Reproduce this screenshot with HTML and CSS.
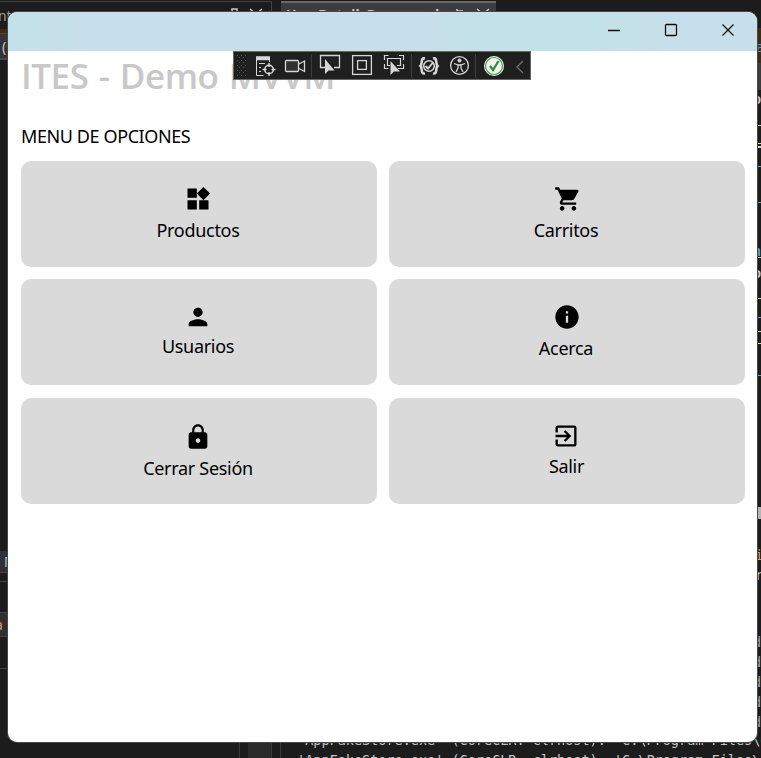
FILE: index.html
```
<!DOCTYPE html>
<html lang="es">
<head>
<meta charset="utf-8">
<title>ITES - Demo MVVM</title>
<link rel="stylesheet" href="styles.css">
</head>
<body>
<div class="desktop">
  <svg class="backdrop" width="761" height="758" aria-hidden="true">
    <path d="M0 1.500H271.500V12" fill="none" stroke="#424242"/>
    <path fill="#3e2b12" d="M0 29h8v4H0z"/><path fill="#343434" d="M0 33h8v27H0z"/>
    <path fill="#464646" d="M0 33h8v1H0zM0 58h8v2H0z"/>
    <path fill="#3d3d3d" d="M281 1h215v12H281z"/><path fill="#686868" d="M281 1h215v2H281z"/>
    <path fill="#3e2b12" d="M756 28h5v35h-5z"/><path fill="#3b3b3b" d="M756 63h5v27h-5z"/>
    <path fill="#303030" d="M0 551h8v22H0zM0 613h8v24H0z"/>
    <path fill="#444" d="M0 572h8v1H0zM0 581h8v1H0zM0 612h8v1H0zM0 636h8v1H0zM0 668h8v1H0z"/>
    <path fill="#d7d5bd" d="M757 109h4v2h-4zM757 125h4v2h-4zM757 135h4v2h-4zM757 142h4v2h-4zM757 240h4v2h-4zM757 257h4v2h-4zM757 267h4v2h-4zM757 274h4v2h-4z" opacity="0"/>
    <path fill="#d7d5bd" d="M757 125h4v1h-4zM757 143h4v1h-4zM757 146h4v2h-4zM757 257h4v1h-4zM757 298h4v1h-4zM757 331h4v1h-4zM757 343h4v1h-4z"/>
    <path fill="#569cd6" d="M757 166h4v1h-4zM757 202h4v1h-4zM757 317h4v1h-4zM757 375h4v1h-4z"/>
    <path fill="#b5b5b5" d="M757 507h4v12h-4z"/>
    <path fill="#2a2a2a" d="M248 740h23v18h-23z"/><path fill="#393939" d="M239 740h1v18h-1zM271 740h1v18h-1zM280 740h1v18h-1z"/>
    <path fill="none" stroke="#c8c8c8" stroke-width="1.500" d="M232 12V9h5v3M250 9l6 5 6-5M457 12V9M457 11h6M477 9l6 5 6-5"/>
  </svg>
  <span class="scrap scrap-left">ent</span>
  <span class="scrap scrap-paren">(</span>
  <span class="scrap scrap-tab">UserDetailsPage.xaml</span>
  <span class="scrap scrap-m">M</span>
  <span class="scrap scrap-a">a</span>
  <span class="edge edge-a">a</span><span class="edge edge-p">o</span><span class="edge edge-n">n</span><span class="edge edge-o">o</span><span class="edge edge-i">i</span><span class="edge edge-r">r</span>
  <pre class="edge edge-list">d
d
d
d
d</pre>
  <pre class="output">'AppFakeStore.exe' (CoreCLR: clrhost): 'C:\Program Files\d
'AppFakeStore.exe' (CoreCLR: clrhost): 'C:\Program Files\d</pre>

  <main class="window">
    <header class="titlebar">
      <button class="caption" aria-label="Minimizar"><svg width="14" height="14"><path d="M1 7.500H13"/></svg></button>
      <button class="caption" aria-label="Maximizar"><svg width="14" height="14"><rect x="1.500" y="1.500" width="11" height="11" rx="1"/></svg></button>
      <button class="caption" aria-label="Cerrar"><svg width="14" height="14"><path d="M1.500 1.500l11 11M12.500 1.500l-11 11"/></svg></button>
    </header>
    <section class="page">
      <h1>ITES - Demo MVVM</h1>
      <h2>MENU DE OPCIONES</h2>
      <div class="menu">
        <div class="card"><svg class="icon" viewBox="0 0 24 24"><path d="M13 13v8h8v-8h-8zM3 21h8v-8H3v8zM3 3v8h8V3H3zm13.660-1.310L11 7.340 16.660 13l5.660-5.660-5.660-5.650z"/></svg><span class="label">Productos</span></div>
        <div class="card"><svg class="icon cart" viewBox="0 0 24 24"><path d="M7 18c-1.100 0-1.990.9-1.990 2S5.900 22 7 22s2-.9 2-2-.9-2-2-2zM1 2v2h2l3.600 7.590-1.350 2.450c-.16.280-.25.610-.25.960 0 1.100.9 2 2 2h12v-2H7.420c-.14 0-.25-.11-.25-.25l.03-.12.900-1.630h7.450c.75 0 1.410-.41 1.750-1.030l3.580-6.490A1 1 0 0 0 20 4H5.210l-.94-2H1zm16 16c-1.100 0-1.990.9-1.990 2s.89 2 1.990 2 2-.9 2-2-.9-2-2-2z"/></svg><span class="label">Carritos</span></div>
        <div class="card"><svg class="icon user" viewBox="0 0 24 24"><path d="M12 12c2.210 0 4-1.790 4-4s-1.790-4-4-4-4 1.790-4 4 1.790 4 4 4zm0 2c-2.670 0-8 1.340-8 4v2h16v-2c0-2.660-5.330-4-8-4z"/></svg><span class="label">Usuarios</span></div>
        <div class="card"><svg class="icon info" viewBox="0 0 24 24"><path d="M12 2C6.480 2 2 6.480 2 12s4.480 10 10 10 10-4.480 10-10S17.520 2 12 2zm1 15h-2v-6h2v6zm0-8h-2V7h2v2z"/></svg><span class="label">Acerca</span></div>
        <div class="card"><svg class="icon lock" viewBox="0 0 24 24"><path d="M18 8h-1V6c0-2.760-2.240-5-5-5S7 3.240 7 6v2H6c-1.100 0-2 .9-2 2v10c0 1.100.9 2 2 2h12c1.100 0 2-.9 2-2V10c0-1.100-.9-2-2-2zm-6 9c-1.100 0-2-.9-2-2s.9-2 2-2 2 .9 2 2-.9 2-2 2zm3.100-9H8.900V6c0-1.710 1.390-3.100 3.100-3.100s3.100 1.390 3.100 3.100v2z"/></svg><span class="label">Cerrar Sesión</span></div>
        <div class="card"><svg class="icon exit" viewBox="0 0 24 24"><path d="M10.090 15.590L11.500 17l5-5-5-5-1.410 1.410L12.670 11H3v2h9.670l-2.580 2.590zM19 3H5a2 2 0 0 0-2 2v4h2V5h14v14H5v-4H3v4a2 2 0 0 0 2 2h14c1.100 0 2-.9 2-2V5c0-1.100-.9-2-2-2z"/></svg><span class="label">Salir</span></div>
      </div>
    </section>
  </main>

  <svg class="debugbar" width="298" height="29" viewBox="0 0 298 29" role="img" aria-label="Herramientas">
    <defs><pattern id="grip" width="4" height="5" patternUnits="userSpaceOnUse" x="4" y="4"><path fill="#565656" d="M0 0h1v1H0zM2 2h1v1H2z"/></pattern></defs>
    <rect x=".5" y=".5" width="297" height="28" fill="#1f1f1f" stroke="#666"/>
    <rect x="4" y="4" width="9" height="22" fill="url(#grip)"/>
    <path stroke="#3c3c3c" d="M78.500 3v24M178.500 3v24M242.500 3v24"/>
    <g fill="none" stroke="#d6d6d6">
      <path d="M23 6.500h14M23 8h14" stroke-width="2.500"/><path d="M23.500 9v15.500h7M36.500 9v2M26 12.500h6M26 16.500h2M26 20.500h2"/>
      <circle cx="36" cy="18.500" r="4.300" stroke-width="1.500"/><path d="M36 12v4M36 21v4M29.500 18.500h4M38.500 18.500h4" stroke-width="1.500"/>
      <rect x="52.500" y="9.500" width="13" height="11" rx="1" fill="#303030" stroke-width="1.300"/><path d="M66 13l5.500-3v10.500l-5.500-3" stroke-width="1.300"/>
      <path d="M92 16.500h-4.500v-12h19v12H101" stroke-width="1.300"/>
      <rect x="119.600" y="4.600" width="18.800" height="18.800" stroke-width="1.300"/><rect x="124.600" y="9.600" width="8.800" height="8.800" stroke-width="1.300"/>
      <path d="M151.500 9V4.500h4M166 4.500h4.500V9M151.500 13v4.500h4M170.500 13v4.500H165M157 14.500h-2.500v-7h13v7H164" stroke-width="1.200"/>
      <path d="M192 7.500c-5-1-2 5-4.500 7.500 2.500 2.500-.5 8 4.500 7.500M200 7.500c5-1 2 5 4.500 7.500-2.500 2.500.5 8-4.500 7.500" stroke-width="2.600"/><circle cx="196" cy="15" r="5.300" stroke-width="1.600"/><path d="M192.500 15l2.500 2.500 5-6" stroke-width="1.900"/>
      <circle cx="226.500" cy="14.500" r="8.900" stroke-width="1.300"/><circle cx="226.500" cy="9.500" r="1.600" fill="#d6d6d6"/><path d="M221 12.500l4 1.500v3l-2 4M232 12.500l-4 1.500v3l2 4M225 14h3" stroke-width="1.300"/>
    </g>
    <path fill="#d6d6d6" d="M92 8v15l3.500-3.500h6zM157.500 10v14l3.500-3.500h6z"/>
    <circle cx="261" cy="15" r="10" fill="#f3f3f3"/><circle cx="261" cy="15" r="8.500" fill="none" stroke="#3fa344" stroke-width="1.200"/>
    <path d="M257 15l3 4 5.500-9" fill="none" stroke="#27902d" stroke-width="2.200"/>
    <path d="M290 10l-6 6 6 6" fill="none" stroke="#707070" stroke-width="1.300"/>
  </svg>
</div>
</body>
</html>
```
FILE: styles.css
```
* { box-sizing: border-box; }
body { margin: 0; background: #1c1c1c; font-family: "Noto Sans", sans-serif; }
.desktop { position: relative; width: 761px; height: 758px; overflow: hidden; padding: 12px 4px 16px 8px; }
.backdrop { position: absolute; left: 0; top: 0; }
.window { position: relative; height: 730px; display: flex; flex-direction: column; width: 749px; background: #fff; border-radius: 9px; overflow: hidden; box-shadow: 0 0 0 1px #484848; }
.titlebar { height: 39px; flex: none; display: flex; justify-content: flex-end; padding-right: 1px; background: linear-gradient(100deg, #c3e1e9 0, #c7dfea 12%, #c7dfea 55%, #c3e1e9 63%, #c3e1e9 78%, #c7dfea 90%); }
.caption { width: 57px; border: 0; padding: 0; background: none; display: flex; align-items: center; justify-content: center; }
.caption svg { fill: none; stroke: #111; stroke-width: 1.3; display: block; margin-top: -3px; }
.page { padding: 0 12px 0 13px; }
h1 { margin: 1px 0 0; height: 48px; font: 600 35px/48px "Open Sans", sans-serif; color: #c8c8c8; white-space: nowrap; letter-spacing: -.45px; word-spacing: 1.6px; }
h2 { margin: 24px 0 0; height: 25px; font-size: 18px; line-height: 25px; font-weight: 400; letter-spacing: -.4px; color: #000; }
.menu { display: grid; grid-template-columns: 356px 356px; grid-auto-rows: 106px; gap: 12.4px 12px; margin-top: 12px; }
.card { display: flex; flex-direction: column; align-items: center; padding: 24px 1px 0 0; border-radius: 10px; background: #dadada; color: #000; }
.icon { width: 28px; height: 28px; flex: none; margin-right: 1px; }
.cart { margin-right: -2px; }
.info { margin-right: -1px; }
.label { height: 25px; margin-top: 5px; font-size: 18px; line-height: 25px; letter-spacing: -.3px; white-space: nowrap; margin-right: 1px; }
.user + .label { margin-top: 3px; }
.exit + .label { margin-top: 4px; margin-right: 0; }
.lock { margin-top: 1px; }
.debugbar { position: absolute; left: 233px; top: 51px; }
.scrap, .edge { position: absolute; color: #c8c8c8; font: 14px/16px "Noto Sans", sans-serif; white-space: pre; }
.scrap-left { left: -10px; top: 8px; color: #a29a8e; }
.scrap-paren { left: 2px; top: 39px; }
.scrap-tab { left: 286px; top: 7px; font-weight: 700; }
.scrap-m { left: 4px; top: 554px; color: #9cc5df; }
.scrap-a { left: -5px; top: 617px; color: #d49a80; }
.edge { left: 753px; font-family: "DejaVu Sans Mono", monospace; font-size: 13.5px; }
.edge-a { left: 756px; top: 39px; color: #569cd6; }
.edge-p { top: 91px; font-weight: 700; }
.edge-n { top: 243px; color: #569cd6; font-weight: 700; }
.edge-o { top: 265px; font-weight: 700; }
.edge-i { left: 755px; top: 547px; color: #d69d62; }
.edge-r { left: 755px; top: 567px; }
.edge-list { top: 632px; margin: 0; line-height: 20px; color: #8fa9bc; }
.output { position: absolute; left: 297px; top: 730px; margin: 0; font: 13.5px/20px "DejaVu Sans Mono", monospace; color: #c4c4c4; }
```
